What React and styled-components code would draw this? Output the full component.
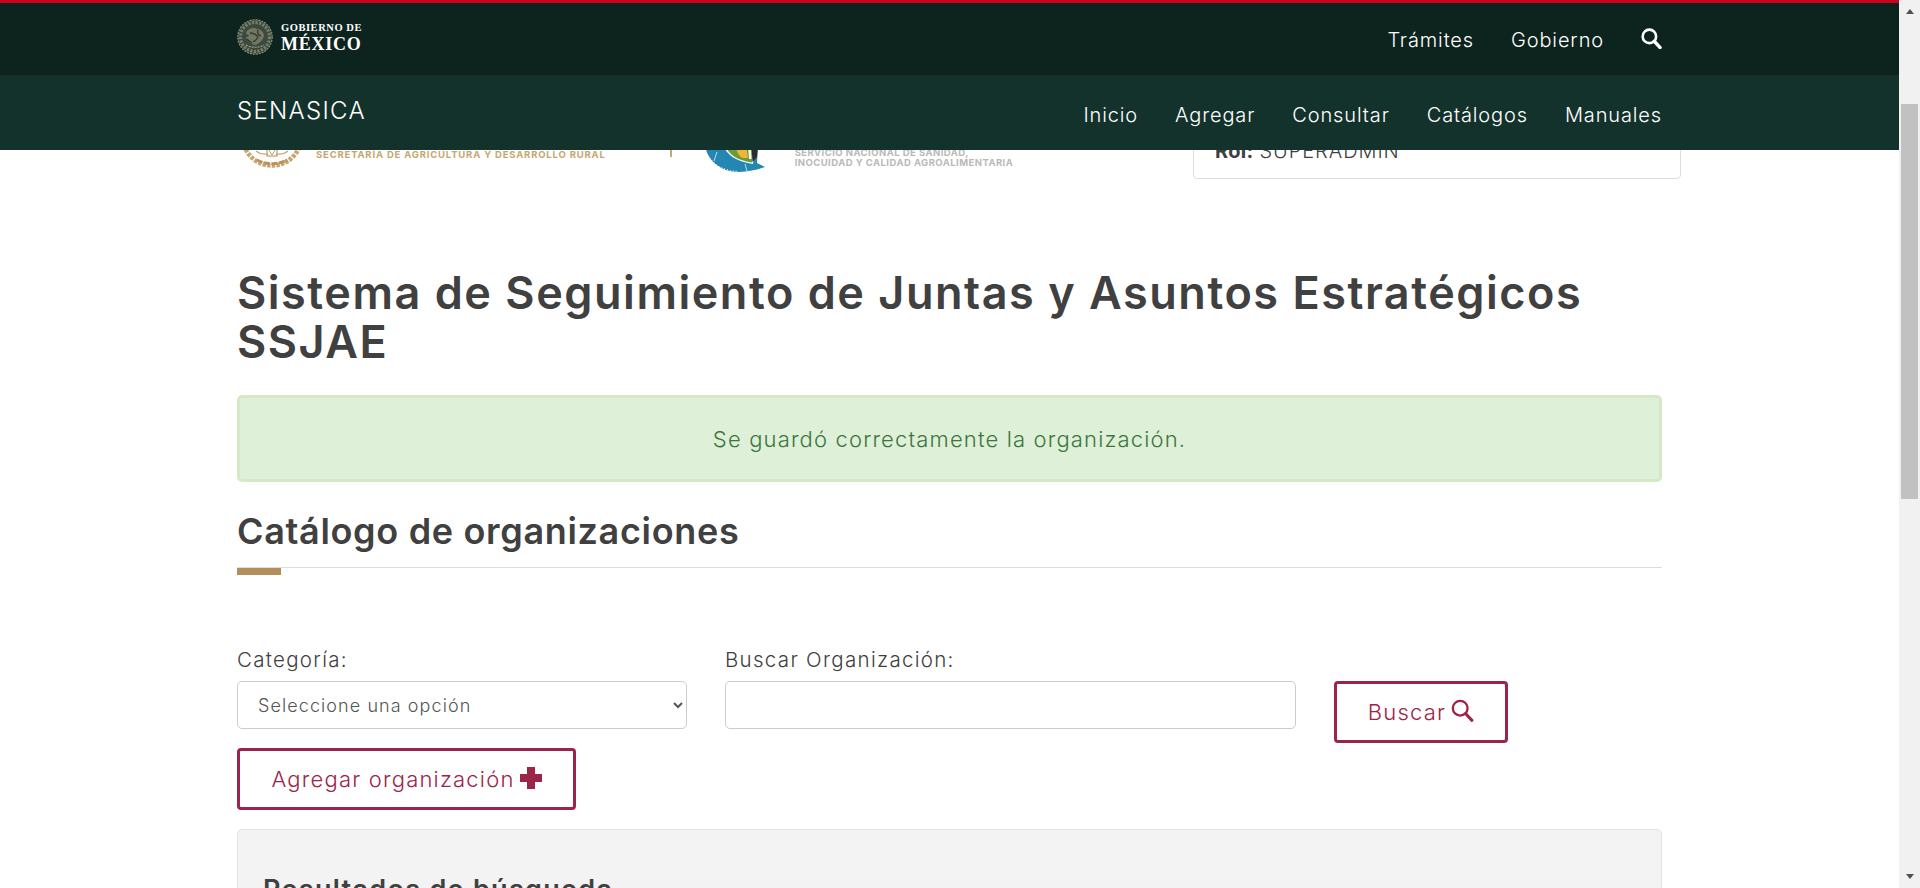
import React from "react";
import styled, { createGlobalStyle } from "styled-components";

const Global = createGlobalStyle`
  * { box-sizing: border-box; }
  html, body { margin: 0; height: 100%; overflow: hidden; background: #fff; }
  body { font-family: Inter, "Open Sans", "Liberation Sans", sans-serif; color: #404041; }
`;

const Shell = styled.div`
  display: grid;
  grid-template-columns: 1fr 21px;
  height: 100vh;
`;
const Viewport = styled.div`
  position: relative;
  overflow: hidden;
  height: 888px;
`;
const Header = styled.header`
  position: absolute;
  top: 0;
  left: 0;
  right: 0;
  z-index: 10;
  border-top: 3px solid #d0021b;
`;
const TopBar = styled.div`
  background: #0c231e;
  height: 72px;
`;
const SubBar = styled.div`
  background: #13322b;
  height: 75px;
`;
const BarInner = styled.div`
  width: 1425px;
  height: 100%;
  margin: 0 auto;
  display: flex;
  align-items: center;
  justify-content: space-between;
`;
const Brand = styled.a`
  display: flex;
  align-items: center;
  gap: 8px;
  margin-top: -5px;
`;
const Wordmark = styled.div`
  display: flex;
  flex-direction: column;
  gap: 2px;
  margin-top: 2px;
  font-family: "Liberation Serif", serif;
  font-weight: 700;
  color: #fff;
`;
const WordSmall = styled.span`
  font-size: 10.5px;
  line-height: 12px;
  letter-spacing: 0.55px;
`;
const WordBig = styled.span`
  font-size: 18px;
  line-height: 17px;
  letter-spacing: 0.75px;
`;
const NavList = styled.nav`
  display: flex;
  align-items: center;
  gap: ${(p) => p.$gap}px;
  margin-top: ${(p) => p.$offset || 0}px;
`;
const NavLink = styled.a`
  color: #fff;
  font-size: 20px;
  font-weight: 350;
  letter-spacing: 0.87px;
  line-height: 24px;
  white-space: nowrap;
`;
const NavIcon = styled.span`
  display: flex;
  margin-top: -3px;
`;
const SiteName = styled.span`
  color: #fff;
  font-size: 24px;
  font-weight: 350;
  letter-spacing: 1.3px;
  margin-top: -4px;
`;
const Main = styled.main`
  width: 1425px;
  margin: 0 auto;
`;
const TopRow = styled.div`
  height: 179px;
  display: flex;
  align-items: flex-end;
`;
const AgencyLogo = styled.div`
  display: flex;
  align-items: flex-end;
  margin-bottom: ${(p) => p.$bottom}px;
  margin-left: ${(p) => p.$left}px;
  gap: ${(p) => p.$gap}px;
`;
const AgencyText = styled.div`
  font-weight: 700;
  color: ${(p) => p.$color};
  font-size: ${(p) => p.$size}px;
  line-height: ${(p) => p.$line}px;
  letter-spacing: ${(p) => p.$spacing}px;
  text-transform: uppercase;
  white-space: nowrap;
  margin-bottom: ${(p) => p.$bottom}px;
`;
const GoldDivider = styled.div`
  width: 2px;
  height: 30px;
  margin: 0 0 ${(p) => p.$bottom}px ${(p) => p.$left}px;
  background: #c5a76f;
`;
const UserCard = styled.div`
  margin-left: auto;
  margin-right: -19px;
  width: 488px;
  height: 100px;
  border: 1px solid #ddd;
  border-radius: 4px;
  padding: 0 21px 15px;
  display: flex;
  align-items: flex-end;
  font-size: 20px;
  font-weight: 350;
  letter-spacing: 0.95px;
  line-height: 24px;
  b { font-weight: 700; margin-right: 6px; letter-spacing: 0.3px; }
`;
const Title = styled.h1`
  margin: 89px 0 0;
  font-size: 45px;
  line-height: 49px;
  font-weight: 600;
  letter-spacing: 1.53px;
  color: #404041;
`;
const Alert = styled.div`
  margin-top: 29px;
  height: 87px;
  background: #dff0d8;
  border: 3px solid #d6e9c6;
  border-radius: 5px;
  color: #3c763d;
  font-size: 22px;
  font-weight: 350;
  letter-spacing: 1.15px;
  display: flex;
  align-items: center;
  justify-content: center;
`;
const SectionTitle = styled.h2`
  margin: 27px 0 0;
  font-size: 36px;
  line-height: 44px;
  font-weight: 600;
  letter-spacing: 0.67px;
  color: #404041;
`;
const SectionRule = styled.div`
  margin-top: 14px;
  border-top: 1px solid #ddd;
  &::before {
    content: "";
    display: block;
    width: 44px;
    height: 7px;
    background: #b38e5d;
  }
`;
const Filters = styled.form`
  margin-top: 73px;
  display: flex;
  align-items: flex-start;
  gap: 38px;
`;
const Field = styled.div`
  width: ${(p) => p.$width}px;
  display: flex;
  flex-direction: column;
  gap: 9px;
`;
const Label = styled.label`
  font-size: 20.5px;
  font-weight: 350;
  line-height: 24px;
  letter-spacing: 1.3px;
  color: #404041;
`;
const Select = styled.select`
  height: 48px;
  width: 100%;
  border: 1px solid #ccc;
  border-radius: 5px;
  background: #fff;
  color: #555;
  padding: 0 16px;
  font: 350 18px Inter, sans-serif;
  letter-spacing: 1.08px;
`;
const Input = styled.input`
  height: 48px;
  width: 100%;
  border: 1px solid #ccc;
  border-radius: 5px;
  background: #fff;
`;
const ButtonSlot = styled.div`
  padding-top: 33px;
`;
const OutlineButton = styled.button`
  width: ${(p) => p.$width}px;
  height: 62px;
  margin-top: ${(p) => p.$top || 0}px;
  border: 3px solid #9d2449;
  border-radius: 4px;
  background: #fff;
  color: #9d2449;
  font: 350 22px Inter, sans-serif;
  letter-spacing: 1.2px;
  display: flex;
  align-items: center;
  justify-content: center;
  gap: 5px;
  padding: 0;
`;
const ButtonIcon = styled.span`
  display: flex;
  margin-top: ${(p) => p.$raise}px;
`;
const ResultsPanel = styled.section`
  margin-top: 19px;
  height: 120px;
  background: #f3f3f3;
  border: 1px solid #e3e3e3;
  border-radius: 5px;
  padding: 44px 25px 0;
`;
const ResultsTitle = styled.h3`
  margin: 0;
  font-size: 27px;
  line-height: 32px;
  font-weight: 600;
  letter-spacing: 1.3px;
  color: #404041;
`;
const Scrollbar = styled.aside`
  height: 888px;
  background: #f1f1f1;
  display: flex;
  flex-direction: column;
  align-items: center;
`;
const ArrowUp = styled.div`
  margin-top: 9px;
  width: 0;
  height: 0;
  border-left: 4.5px solid transparent;
  border-right: 4.5px solid transparent;
  border-bottom: 5px solid #505050;
`;
const Thumb = styled.div`
  margin-top: 90px;
  width: 17px;
  height: 395px;
  background: #c1c1c1;
`;
const ArrowDown = styled.div`
  margin-top: auto;
  margin-bottom: 9px;
  width: 0;
  height: 0;
  border-left: 4.5px solid transparent;
  border-right: 4.5px solid transparent;
  border-top: 5px solid #505050;
`;

const SearchIcon = ({ size, color, ring = 2.3, handle = 3 }) => (
  <svg width={size} height={size} viewBox="0 0 20 20" fill="none">
    <circle cx="8" cy="8" r="6.4" stroke={color} strokeWidth={ring} />
    <path d="M12.6 12.6 18.2 18.6" stroke={color} strokeWidth={handle} strokeLinecap="round" />
  </svg>
);

const PlusIcon = () => (
  <svg width="22" height="22" viewBox="0 0 22 22" shapeRendering="crispEdges">
    <path d="M7 0h8v7h7v8h-7v7H7v-7H0V7h7z" fill="#9d2449" />
  </svg>
);

const MexicoSeal = () => (
  <svg width="36" height="36" viewBox="0 0 36 36" fill="none">
    <circle cx="18" cy="18" r="17.2" fill="#3a4a40" stroke="#8e8c72" strokeWidth="1.2" strokeDasharray="2 1" />
    <circle cx="18" cy="18" r="14.5" stroke="#7a7d66" strokeWidth="3.2" strokeDasharray="2.2 1.4" />
    <path d="M9 13c3-4 8-5 11-3 4 0 7 3 7 7-1 4-5 8-9 9-4-1-8-4-9-8 2 0 3-1 3-2-2 0-3-1-3-3z" fill="#74775f" />
    <path d="M13 14c3 0 6 1 8 4-1 2-3 4-5 5M21 11c-1 3 0 5 3 6M10 20c2 2 3 3 5 4" stroke="#2b3a30" strokeWidth="1.3" />
    <path d="M9 26c5 3 13 3 18 0" stroke="#a3a388" strokeWidth="1.2" strokeDasharray="2 1" />
  </svg>
);

const SaderSeal = () => (
  <svg width="60" height="60" viewBox="0 0 60 60" fill="none" style={{ overflow: "visible" }}>
    <path d="M0.5 28A29.5 29.5 0 0 0 59.5 28" stroke="#c5a76f" strokeWidth="4.6" strokeDasharray="3.4 1.2" />
    <path d="M15 52c9 5 21 5 30 0" stroke="#b8935c" strokeWidth="3" strokeDasharray="6 1.5" />
    <path d="M14 43c5 4 8 3 12 3M46 43c-5 4-8 3-12 3" stroke="#c9ae7e" strokeWidth="1.2" />
    <rect x="25" y="41" width="10" height="7" stroke="#b8935c" strokeWidth="1.1" />
    <path d="M27 42l3 5 3-5" stroke="#b8935c" strokeWidth="0.9" />
  </svg>
);

const SenasicaSeal = () => (
  <svg width="64" height="42" viewBox="0 0 64 42" fill="none">
    <path d="M3 15C5 30 18 42 37 42C46 42 55 40 63 37L55 33L56 15Z" fill="#2386b3" />
    <path d="M6 26C11 35 22 41 37 41.5" stroke="#fff" strokeWidth="1.4" strokeDasharray="0.8 2.2" />
    <path d="M15 22 12 31M43 34l2 7" stroke="#e8f3f8" strokeWidth="0.8" />
    <path d="M21 15C25 25 33 31 51 34L53 15Z" fill="#fff" />
    <path d="M23 15C27 25 34 30 50 32.5L52 15Z" fill="#6b9b35" />
    <path d="M33 15C35 22 37 27 41 28L46 28L44 15Z" fill="#f0b43a" />
    <path d="M46 15 47 29 49.5 29 48.5 15Z" fill="#fff" />
    <path d="M49.5 15 50.5 32 55 27 56 15Z" fill="#2c2c2c" />
  </svg>
);

export default function App() {
  return (
    <Shell>
      <Global />
      <Viewport>
        <Header>
          <TopBar>
            <BarInner>
              <Brand>
                <MexicoSeal />
                <Wordmark>
                  <WordSmall>GOBIERNO DE</WordSmall>
                  <WordBig>MÉXICO</WordBig>
                </Wordmark>
              </Brand>
              <NavList $gap={37} $offset={1}>
                <NavLink>Trámites</NavLink>
                <NavLink>Gobierno</NavLink>
                <NavIcon>
                  <SearchIcon size={21} color="#fff" ring={2.5} handle={3.2} />
                </NavIcon>
              </NavList>
            </BarInner>
          </TopBar>
          <SubBar>
            <BarInner>
              <SiteName>SENASICA</SiteName>
              <NavList $gap={37} $offset={4}>
                <NavLink>Inicio</NavLink>
                <NavLink>Agregar</NavLink>
                <NavLink>Consultar</NavLink>
                <NavLink>Catálogos</NavLink>
                <NavLink>Manuales</NavLink>
              </NavList>
            </BarInner>
          </SubBar>
        </Header>
        <Main>
          <TopRow>
            <AgencyLogo $bottom={11} $left={4.5} $gap={14.5}>
              <SaderSeal />
              <AgencyText $color="#c5a76f" $size={9.5} $line={12} $spacing={0.82} $bottom={7}>
                Secretaría de Agricultura y Desarrollo Rural
              </AgencyText>
            </AgencyLogo>
            <GoldDivider $left={64} $bottom={22} />
            <AgencyLogo $bottom={7} $left={30} $gap={29}>
              <SenasicaSeal />
              <AgencyText $color="#b9b9b9" $size={9.5} $line={10} $spacing={0.45} $bottom={4}>
                Servicio Nacional de Sanidad,
                <br />
                Inocuidad y Calidad Agroalimentaria
              </AgencyText>
            </AgencyLogo>
            <UserCard>
              <b>Rol:</b> SUPERADMIN
            </UserCard>
          </TopRow>
          <Title>
            Sistema de Seguimiento de Juntas y Asuntos Estratégicos
            <br />
            SSJAE
          </Title>
          <Alert>Se guardó correctamente la organización.</Alert>
          <SectionTitle>Catálogo de organizaciones</SectionTitle>
          <SectionRule />
          <Filters>
            <Field $width={450}>
              <Label>Categoría:</Label>
              <Select defaultValue="">
                <option value="">Seleccione una opción</option>
              </Select>
            </Field>
            <Field $width={571}>
              <Label>Buscar Organización:</Label>
              <Input type="text" />
            </Field>
            <ButtonSlot>
              <OutlineButton type="button" $width={174}>
                Buscar
                <ButtonIcon $raise={-4}>
                  <SearchIcon size={23} color="#9d2449" ring={2} handle={2.6} />
                </ButtonIcon>
              </OutlineButton>
            </ButtonSlot>
          </Filters>
          <OutlineButton type="button" $width={339} $top={5}>
            Agregar organización
            <ButtonIcon $raise={-3}>
              <PlusIcon />
            </ButtonIcon>
          </OutlineButton>
          <ResultsPanel>
            <ResultsTitle>Resultados de búsqueda</ResultsTitle>
          </ResultsPanel>
        </Main>
      </Viewport>
      <Scrollbar>
        <ArrowUp />
        <Thumb />
        <ArrowDown />
      </Scrollbar>
    </Shell>
  );
}
